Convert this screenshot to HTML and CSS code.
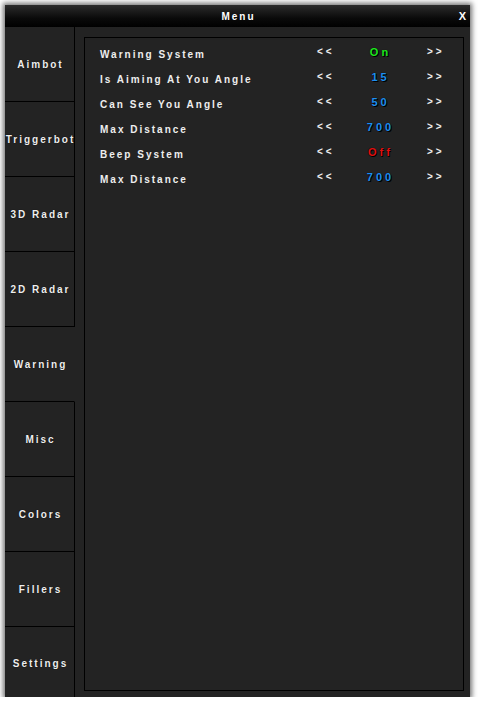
FILE: index.html
```html
<!DOCTYPE html>
<html lang="en">
<head>
    <meta charset="UTF-8">
    <title>Menu</title>
    <link rel="stylesheet" href="styles.css">
</head>
<body>
    <div class="window">
        <div class="titlebar">
            <span class="title">Menu</span>
            <span class="close">X</span>
        </div>
        <div class="main">
            <div class="sidebar">
                <div class="tab">Aimbot</div>
                <div class="tab">Triggerbot</div>
                <div class="tab">3D Radar</div>
                <div class="tab">2D Radar</div>
                <div class="tab active">Warning</div>
                <div class="tab">Misc</div>
                <div class="tab">Colors</div>
                <div class="tab">Fillers</div>
                <div class="tab last">Settings</div>
            </div>
            <div class="panel">
                <div class="row">
                    <span class="label">Warning System</span>
                    <span class="arrow">&lt;&lt;</span>
                    <span class="value on">On</span>
                    <span class="arrow">&gt;&gt;</span>
                </div>
                <div class="row">
                    <span class="label">Is Aiming At You Angle</span>
                    <span class="arrow">&lt;&lt;</span>
                    <span class="value num">15</span>
                    <span class="arrow">&gt;&gt;</span>
                </div>
                <div class="row">
                    <span class="label">Can See You Angle</span>
                    <span class="arrow">&lt;&lt;</span>
                    <span class="value num">50</span>
                    <span class="arrow">&gt;&gt;</span>
                </div>
                <div class="row">
                    <span class="label">Max Distance</span>
                    <span class="arrow">&lt;&lt;</span>
                    <span class="value num">700</span>
                    <span class="arrow">&gt;&gt;</span>
                </div>
                <div class="row">
                    <span class="label">Beep System</span>
                    <span class="arrow">&lt;&lt;</span>
                    <span class="value off">Off</span>
                    <span class="arrow">&gt;&gt;</span>
                </div>
                <div class="row">
                    <span class="label">Max Distance</span>
                    <span class="arrow">&lt;&lt;</span>
                    <span class="value num">700</span>
                    <span class="arrow">&gt;&gt;</span>
                </div>
            </div>
        </div>
    </div>
</body>
</html>
```

FILE: styles.css
```css
body {
    margin: 0;
    background: #fff;
    font-family: 'Liberation Sans', Arial, sans-serif;
    font-weight: bold;
    font-size: 10px;
    letter-spacing: 2px;
    color: #eee;
}
.window {
    margin: 5px 0 0 5px;
    width: 465px;
    height: 692px;
    background: #232323;
    box-shadow: 0 0 5px 2px rgba(0, 0, 0, 0.55);
    display: flex;
    flex-direction: column;
}
.titlebar {
    height: 22px;
    background: linear-gradient(#2c2c2c, #0a0a0a 60%, #000);
    display: flex;
    align-items: center;
    justify-content: center;
    position: relative;
    color: #fff;
}
.title {
    padding-left: 2px;
}
.close {
    position: absolute;
    right: 4px;
    top: 5px;
    letter-spacing: 0;
    font-size: 11px;
}
.main {
    flex: 1;
    display: flex;
}
.sidebar {
    width: 70px;
    display: flex;
    flex-direction: column;
}
.tab {
    height: 74px;
    border-bottom: 1px solid #000;
    border-right: 1px solid #000;
    display: flex;
    align-items: center;
    justify-content: center;
    padding-left: 2px;
    text-shadow: 0 0 1px #000;
}
.tab.active {
    border-right-color: transparent;
}
.tab.last {
    flex: 1;
    border-bottom: none;
    padding-top: 2px;
}
.panel {
    margin: 10px 6px 6px 9px;
    flex: 1;
    border: 1px solid #000;
    padding: 4px 0 0 15px;
}
.row {
    height: 25px;
    display: flex;
    align-items: center;
}
.label {
    width: 217px;
}
.arrow {
    width: 14px;
    letter-spacing: 3px;
    padding-bottom: 6px;
}
.value {
    width: 93px;
    padding: 0 0 6px 3px;
    text-align: center;
    font-size: 11px;
    letter-spacing: 3px;
    text-shadow: 0 0 1px #000, 1px 1px 0 #000;
}
.value.on {
    color: #1ee61e;
}
.value.num {
    color: #1e8ff0;
}
.value.off {
    color: #e01010;
}
```
